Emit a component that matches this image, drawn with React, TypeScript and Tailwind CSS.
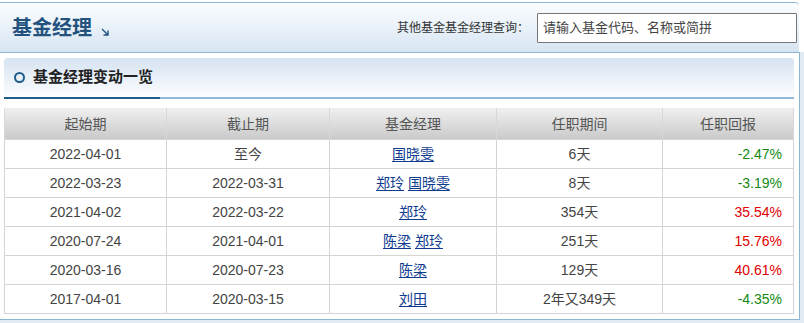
import React from 'react';

type Row = {
  start: string;
  end: string;
  managers: string[];
  term: string;
  ret: string;
};

const rows: Row[] = [
  { start: '2022-04-01', end: '至今', managers: ['国晓雯'], term: '6天', ret: '-2.47%' },
  { start: '2022-03-23', end: '2022-03-31', managers: ['郑玲', '国晓雯'], term: '8天', ret: '-3.19%' },
  { start: '2021-04-02', end: '2022-03-22', managers: ['郑玲'], term: '354天', ret: '35.54%' },
  { start: '2020-07-24', end: '2021-04-01', managers: ['陈梁', '郑玲'], term: '251天', ret: '15.76%' },
  { start: '2020-03-16', end: '2020-07-23', managers: ['陈梁'], term: '129天', ret: '40.61%' },
  { start: '2017-04-01', end: '2020-03-15', managers: ['刘田'], term: '2年又349天', ret: '-4.35%' },
];

const font = { fontFamily: '"Liberation Sans", "Noto Sans CJK SC", sans-serif' };

const App: React.FC = () => {
  return (
    <div className="w-[804px] h-[323px] overflow-hidden bg-[#e2ebf4]" style={font}>
      {/* Top header */}
      <div className="pt-[2px] bg-white">
        <div className="w-[799px] h-[50px] border-t border-[#8db6d3] rounded-tr-[4px] bg-gradient-to-b from-[#fbfdff] to-[#d7e5f2] flex items-center pl-[12px] pr-[2px]">
          <div className="flex items-end">
            <span className="text-[20px] font-bold text-[#24527e] leading-none">基金经理</span>
            <svg width="9" height="9" viewBox="0 0 9 9" className="ml-[9px] mb-[1px]">
              <path d="M1 1 L7 7 M7 2.5 L7 7 L2.5 7" stroke="#24527e" strokeWidth="1.4" fill="none" />
            </svg>
          </div>
          <div className="ml-auto flex items-center">
            <span className="text-[12px] text-[#333]">其他基金基金经理查询：</span>
            <div className="ml-[8px] w-[260px] h-[30px] border border-[#777] rounded-[1px] bg-white flex items-center pl-[5px] text-[13px] text-[#444]">
              请输入基金代码、名称或简拼
            </div>
          </div>
        </div>
      </div>

      {/* Content panel */}
      <div className="w-[800px] h-[268px] border-t border-r border-b border-[#8db6d3] bg-white pt-[5px] pl-[4px]">
        <div className="w-[790px]">
          <div className="h-[39px] rounded-t-[4px] bg-gradient-to-b from-[#d6e3f1] to-[#fbfdff] flex items-center pl-[10px]">
            <span className="w-[11px] h-[11px] rounded-full border-[2.5px] border-[#1e5c8a]" />
            <span className="ml-[8px] text-[15px] font-bold text-[#222]">基金经理变动一览</span>
          </div>
          <div className="flex h-[2px]">
            <div className="w-[156px] bg-[#1f5e8a]" />
            <div className="flex-1 bg-[#93b9d6]" />
          </div>
        </div>

        <table className="mt-[9px] w-[789px] border-collapse table-fixed text-[14px]">
          <colgroup>
            <col className="w-[162px]" />
            <col className="w-[163px]" />
            <col className="w-[167px]" />
            <col className="w-[166px]" />
            <col className="w-[131px]" />
          </colgroup>
          <thead>
            <tr className="h-[31px] bg-gradient-to-b from-[#efefef] to-[#c9c9c9]">
              {['起始期', '截止期', '基金经理', '任职期间', '任职回报'].map((h) => (
                <th key={h} className="font-normal text-[#555] border border-[#d8d8d8] border-t-[#ececec]">
                  {h}
                </th>
              ))}
            </tr>
          </thead>
          <tbody>
            {rows.map((r) => {
              const negative = r.ret.startsWith('-');
              return (
                <tr key={r.start} className="h-[29px] text-[#444]">
                  <td className="border border-[#d4d4d4] text-center">{r.start}</td>
                  <td className="border border-[#d4d4d4] text-center">{r.end}</td>
                  <td className="border border-[#d4d4d4] text-center">
                    {r.managers.map((m, i) => (
                      <React.Fragment key={m}>
                        {i > 0 && ' '}
                        <a className="text-[#0d3b8e] underline underline-offset-[2px]">{m}</a>
                      </React.Fragment>
                    ))}
                  </td>
                  <td className="border border-[#d4d4d4] text-center">{r.term}</td>
                  <td
                    className={
                      'border border-[#d4d4d4] text-right pr-[11px] ' +
                      (negative ? 'text-[#148a14]' : 'text-[#e00000]')
                    }
                  >
                    {r.ret}
                  </td>
                </tr>
              );
            })}
          </tbody>
        </table>
      </div>
    </div>
  );
};

export default App;
